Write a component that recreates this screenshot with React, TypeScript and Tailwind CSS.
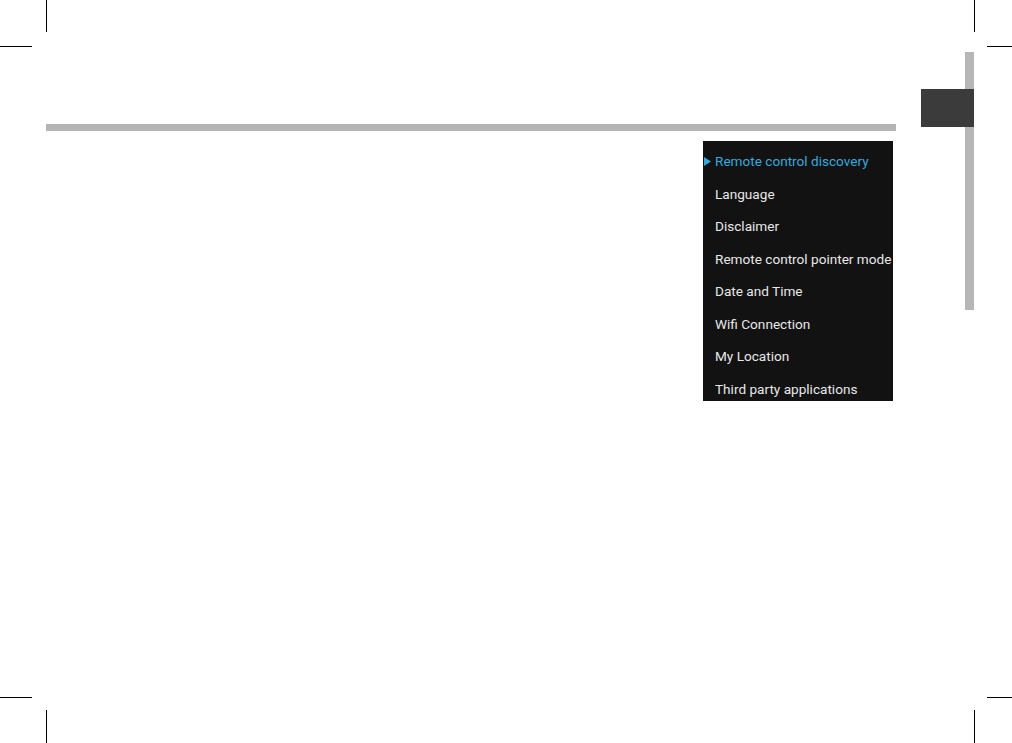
const items = [
  'Remote control discovery',
  'Language',
  'Disclaimer',
  'Remote control pointer mode',
  'Date and Time',
  'Wifi Connection',
  'My Location',
  'Third party applications',
];

function CropMarks() {
  return (
    <>
      <div className="absolute left-[46px] top-0 h-[32px] w-px bg-black" />
      <div className="absolute left-0 top-[46px] h-px w-[32px] bg-black" />
      <div className="absolute left-[974px] top-0 h-[32px] w-px bg-black" />
      <div className="absolute left-[987px] top-[46px] h-px w-[25px] bg-black" />
      <div className="absolute left-0 top-[697px] h-px w-[32px] bg-black" />
      <div className="absolute left-[46px] top-[710px] h-[33px] w-px bg-black" />
      <div className="absolute left-[987px] top-[697px] h-px w-[25px] bg-black" />
      <div className="absolute left-[974px] top-[710px] h-[33px] w-px bg-black" />
    </>
  );
}

function SettingsMenu() {
  return (
    <div className="ml-[657px] mt-[10px] h-[260px] w-[190px] overflow-hidden bg-[#121212] pt-[4px]">
      {items.map((label, i) => (
        <div key={label} className="flex h-[32.5px] items-center gap-[4px] pl-[1px]">
          <svg width="7" height="9" viewBox="0 0 7 9" className={i === 0 ? '' : 'invisible'}>
            <polygon points="0,0 7,4.5 0,9" fill="#33a9dc" />
          </svg>
          <span
            className={
              'whitespace-nowrap text-[13.6px] font-["Roboto",sans-serif] ' +
              (i === 0 ? 'text-[#36aade]' : 'text-[#e8e8e8]')
            }
          >
            {label}
          </span>
        </div>
      ))}
    </div>
  );
}

export default function App() {
  return (
    <div className="relative h-[743px] w-[1012px] overflow-hidden bg-white">
      <CropMarks />
      <div className="flex">
        <div className="pl-[46px] pt-[124px]">
          <div className="h-[7px] w-[850px] bg-[#b4b4b4]" />
          <SettingsMenu />
        </div>
        <div className="relative ml-[69px] mt-[52px] h-[258px] w-[9px] bg-[#b6b6b6]">
          <div className="absolute left-[-44px] top-[37px] h-[38px] w-[53px] bg-[#3c3b3b]" />
        </div>
      </div>
    </div>
  );
}
